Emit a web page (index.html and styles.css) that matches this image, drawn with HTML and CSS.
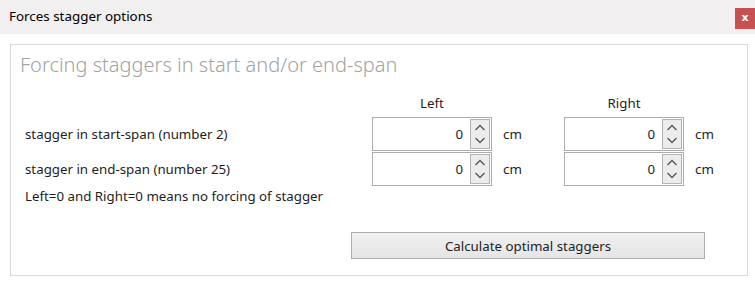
FILE: index.html
```html
<!DOCTYPE html>
<html>
<head>
<meta charset="utf-8">
<link rel="stylesheet" href="styles.css">
</head>
<body>
<div class="window">
  <div class="titlebar">
    <span class="title">Forces stagger options</span>
    <span class="close">x</span>
  </div>
  <div class="content">
    <div class="panel">
      <div class="heading">Forcing staggers in start and/or end-span</div>
      <div class="form">
        <div></div>
        <div class="colhead">Left</div>
        <div class="colhead">Right</div>

        <div class="label">stagger in start-span (number 2)</div>
        <div class="field">
          <div class="spinbox"><span class="value">0</span><span class="spin"><svg width="18" height="28" viewBox="0 0 18 28"><path d="M4.5 10 L9 5.5 L13.5 10" fill="none" stroke="#555" stroke-width="1.3"/><path d="M4.5 18 L9 22.5 L13.5 18" fill="none" stroke="#555" stroke-width="1.3"/></svg></span></div>
          <span class="unit">cm</span>
        </div>
        <div class="field">
          <div class="spinbox"><span class="value">0</span><span class="spin"><svg width="18" height="28" viewBox="0 0 18 28"><path d="M4.5 10 L9 5.5 L13.5 10" fill="none" stroke="#555" stroke-width="1.3"/><path d="M4.5 18 L9 22.5 L13.5 18" fill="none" stroke="#555" stroke-width="1.3"/></svg></span></div>
          <span class="unit">cm</span>
        </div>

        <div class="label">stagger in end-span (number 25)</div>
        <div class="field">
          <div class="spinbox"><span class="value">0</span><span class="spin"><svg width="18" height="28" viewBox="0 0 18 28"><path d="M4.5 10 L9 5.5 L13.5 10" fill="none" stroke="#555" stroke-width="1.3"/><path d="M4.5 18 L9 22.5 L13.5 18" fill="none" stroke="#555" stroke-width="1.3"/></svg></span></div>
          <span class="unit">cm</span>
        </div>
        <div class="field">
          <div class="spinbox"><span class="value">0</span><span class="spin"><svg width="18" height="28" viewBox="0 0 18 28"><path d="M4.5 10 L9 5.5 L13.5 10" fill="none" stroke="#555" stroke-width="1.3"/><path d="M4.5 18 L9 22.5 L13.5 18" fill="none" stroke="#555" stroke-width="1.3"/></svg></span></div>
          <span class="unit">cm</span>
        </div>
      </div>
      <div class="note">Left=0 and Right=0 means no forcing of stagger</div>
      <div class="actions">
        <button class="btn">Calculate optimal staggers</button>
      </div>
    </div>
  </div>
</div>
</body>
</html>
```

FILE: styles.css
```css
* { box-sizing: border-box; }
html, body { margin: 0; padding: 0; background: #ffffff; }
body {
  width: 755px;
  height: 283px;
  overflow: hidden;
  font-family: "Noto Sans", "Open Sans", sans-serif;
  font-size: 13.3px;
  color: #1e1e1e;
}
.titlebar {
  height: 34px;
  background: #f1efef;
  display: flex;
  justify-content: space-between;
  align-items: flex-start;
  padding-left: 9px;
}
.title {
  font-size: 13.4px;
  line-height: 18px;
  margin-top: 7px;
  color: #000;
}
.close {
  margin-top: 8px;
  width: 20px;
  height: 21px;
  background: #c75050;
  color: #fff;
  font-weight: bold;
  font-size: 11px;
  line-height: 20px;
  text-align: center;
  font-family: "DejaVu Sans", sans-serif;
}
.content {
  padding: 10px 7px 0 10px;
}
.panel {
  border: 1px solid #d9d9d9;
  padding: 7px 0 16px 0;
  display: flex;
  flex-direction: column;
}
.heading {
  padding-left: 9px;
  font-size: 20px;
  line-height: 26px;
  font-weight: 300;
  color: #a3a3a3;
}
.form {
  margin-top: 16px;
  padding-left: 14px;
  display: grid;
  grid-template-columns: 347px 192px 160px;
  grid-template-rows: 22px 34px 34px;
  row-gap: 1px;
}
.colhead {
  width: 120px;
  text-align: center;
  line-height: 18px;
}
.label {
  display: flex;
  align-items: center;
}
.field {
  display: flex;
  align-items: center;
}
.spinbox {
  width: 120px;
  height: 34px;
  border: 1px solid #acacac;
  display: flex;
  align-items: center;
  justify-content: flex-end;
  padding-right: 1px;
  background: #fff;
}
.value {
  margin-right: 7px;
}
.spin {
  width: 20px;
  height: 30px;
  border: 1px solid #b4b4b4;
  background: #ececec;
  display: flex;
  align-items: center;
  justify-content: center;
}
.spin svg { display: block; }
.unit {
  margin-left: 11px;
}
.note {
  padding-left: 14px;
  line-height: 20px;
}
.actions {
  margin-top: 26px;
  padding-left: 340px;
  display: flex;
}
.btn {
  width: 354px;
  height: 27px;
  border: 1px solid #adadad;
  background: linear-gradient(#f0f0f0, #e5e5e5);
  font-family: "Noto Sans", "Open Sans", sans-serif;
  font-size: 13.3px;
  color: #1e1e1e;
  padding: 0;
  margin: 0;
}
```
